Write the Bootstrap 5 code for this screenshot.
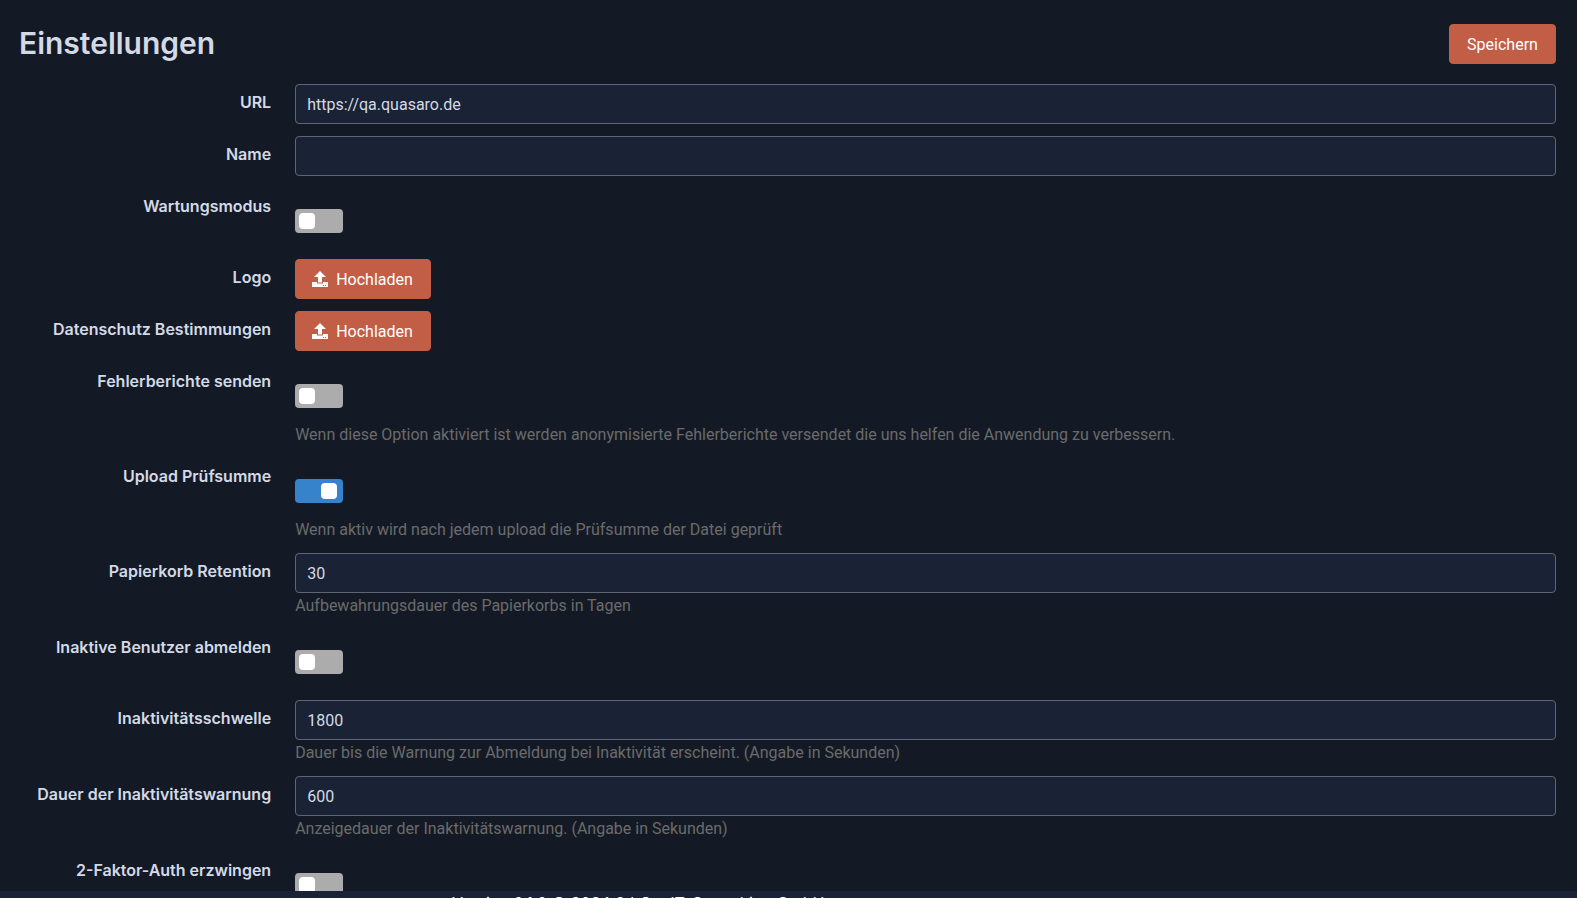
<!DOCTYPE html>
<html lang="de">
<head>
<meta charset="utf-8">
<meta name="viewport" content="width=device-width, initial-scale=1">
<title>Einstellungen</title>
<link rel="stylesheet" href="https://cdn.jsdelivr.net/npm/bootstrap@5.3.0/dist/css/bootstrap.min.css">
<script src="https://cdn.jsdelivr.net/npm/bootstrap@5.3.0/dist/js/bootstrap.bundle.min.js" defer></script>
<style>
  body { background: #141a25; color: #d3dae6; font: 16px/24px Inter, sans-serif; height: 100vh; overflow: hidden; }
  .settings-page { padding: 24px 21px 0 19px; overflow: hidden; min-height: 0; }
  .page-title { font-size: 30px; line-height: 38px; font-weight: 600; }
  .btn-accent { --bs-btn-color: #fff; --bs-btn-bg: #c25e45; --bs-btn-border-color: #c25e45; --bs-btn-hover-color: #fff; --bs-btn-hover-bg: #ad523b; --bs-btn-hover-border-color: #ad523b; min-width: 107px; height: 40px; padding: 1px 16px 0; border-radius: 4px; font-family: Roboto, sans-serif; }
  .btn-upload { min-width: 136px; }
  .btn-upload svg { margin-bottom: 2px; }
  .settings-form { display: grid; gap: 12px; }
  .setting { display: grid; grid-template-columns: minmax(0, 1fr) minmax(0, 5fr); gap: 24px; }
  .setting-label { padding-top: 6px; text-align: right; font-weight: 600; }
  .setting .form-control { height: 40px; padding: 0 11px; background: #1a2235; border: 1px solid #5f6572; border-radius: 4px; color: #d3dae6; font-family: Roboto, sans-serif; }
  .hint { margin: 0; padding-top: 2px; line-height: 22px; color: #6b6b6b; font-family: Roboto, sans-serif; }
  .switch-box { padding: 21px 0 14px; display: flex; }
  .toggle { appearance: none; width: 48px; height: 24px; margin: 0; padding: 4px; border-radius: 4px; background: #acacac; cursor: pointer; }
  .toggle::before { content: ""; display: block; width: 16px; height: 16px; border-radius: 4px; background: #fff; }
  .toggle:checked { background: #3683cb; }
  .toggle:checked::before { margin-left: 22px; }
  .page-footer { background: #1a2235; height: 7px; padding-left: 452px; overflow: hidden; flex: none; color: #fff; white-space: nowrap; }
</style>
</head>
<body class="d-flex flex-column">
<main class="settings-page flex-grow-1">
  <header class="d-flex justify-content-between mb-3 pb-1">
    <h1 class="page-title mb-0">Einstellungen</h1>
    <button class="btn btn-accent" type="submit" form="settings">Speichern</button>
  </header>
  <form id="settings" class="settings-form">
    <div class="setting"><label class="setting-label" for="url">URL</label><div><input class="form-control" id="url" type="text" value="https://qa.quasaro.de"></div></div>
    <div class="setting"><label class="setting-label" for="name">Name</label><div><input class="form-control" id="name" type="text"></div></div>
    <div class="setting"><label class="setting-label" for="maintenance">Wartungsmodus</label><div><div class="switch-box"><input class="toggle" id="maintenance" type="checkbox" role="switch"></div></div></div>
    <div class="setting"><label class="setting-label" for="logo">Logo</label><div><button class="btn btn-accent btn-upload d-inline-flex align-items-center gap-2" id="logo" type="button"><svg width="16" height="16" viewBox="0 0 16 16" fill="#fff" aria-hidden="true"><path fill-rule="evenodd" d="M8 0L14 6H10V11.500H6V6H2ZM0 11H5V12.500H11V11H16V16H0ZM11 14V15H12V14ZM13 14V15H14V14Z"/></svg>Hochladen</button></div></div>
    <div class="setting"><label class="setting-label" for="privacy">Datenschutz Bestimmungen</label><div><button class="btn btn-accent btn-upload d-inline-flex align-items-center gap-2" id="privacy" type="button"><svg width="16" height="16" viewBox="0 0 16 16" fill="#fff" aria-hidden="true"><path fill-rule="evenodd" d="M8 0L14 6H10V11.500H6V6H2ZM0 11H5V12.500H11V11H16V16H0ZM11 14V15H12V14ZM13 14V15H14V14Z"/></svg>Hochladen</button></div></div>
    <div class="setting"><label class="setting-label" for="reports">Fehlerberichte senden</label><div><div class="switch-box"><input class="toggle" id="reports" type="checkbox" role="switch"></div><p class="hint">Wenn diese Option aktiviert ist werden anonymisierte Fehlerberichte versendet die uns helfen die Anwendung zu verbessern.</p></div></div>
    <div class="setting"><label class="setting-label" for="checksum">Upload Prüfsumme</label><div><div class="switch-box"><input class="toggle" id="checksum" type="checkbox" role="switch" checked></div><p class="hint">Wenn aktiv wird nach jedem upload die Prüfsumme der Datei geprüft</p></div></div>
    <div class="setting"><label class="setting-label" for="retention">Papierkorb Retention</label><div><input class="form-control" id="retention" type="text" value="30"><p class="hint">Aufbewahrungsdauer des Papierkorbs in Tagen</p></div></div>
    <div class="setting"><label class="setting-label" for="logout">Inaktive Benutzer abmelden</label><div><div class="switch-box"><input class="toggle" id="logout" type="checkbox" role="switch"></div></div></div>
    <div class="setting"><label class="setting-label" for="threshold">Inaktivitätsschwelle</label><div><input class="form-control" id="threshold" type="text" value="1800"><p class="hint">Dauer bis die Warnung zur Abmeldung bei Inaktivität erscheint. (Angabe in Sekunden)</p></div></div>
    <div class="setting"><label class="setting-label" for="warning">Dauer der Inaktivitätswarnung</label><div><input class="form-control" id="warning" type="text" value="600"><p class="hint">Anzeigedauer der Inaktivitätswarnung. (Angabe in Sekunden)</p></div></div>
    <div class="setting"><label class="setting-label" for="twofactor">2-Faktor-Auth erzwingen</label><div><div class="switch-box"><input class="toggle" id="twofactor" type="checkbox" role="switch"></div></div></div>
  </form>
</main>
<footer class="page-footer">Version 0.1.0 © 2024 6thGenIT-Consulting GmbH</footer>
</body>
</html>
